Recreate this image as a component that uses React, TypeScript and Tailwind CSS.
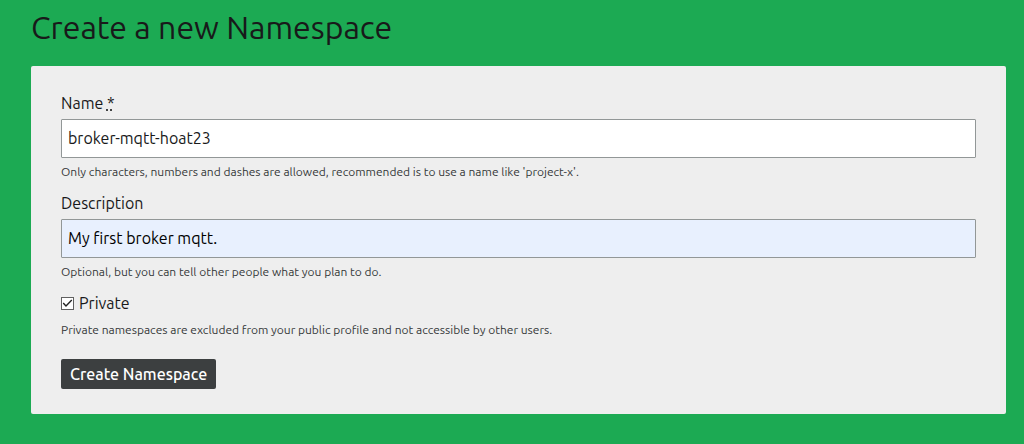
import { useState } from "react";
import type { InputHTMLAttributes, ReactNode } from "react";

type TextFieldProps = InputHTMLAttributes<HTMLInputElement> & {
  id: string;
  label: ReactNode;
  hint: string;
};

function Hint({ id, children }: { id: string; children: ReactNode }) {
  return (
    <p id={id} className="text-[12px] leading-5 text-[#36393a]">
      {children}
    </p>
  );
}

function TextField({ id, label, hint, className = "", ...rest }: TextFieldProps) {
  return (
    <div className="mb-[9px] flex flex-col gap-1">
      <label htmlFor={id} className="leading-6">
        {label}
      </label>
      <input
        id={id}
        type="text"
        aria-describedby={`${id}-hint`}
        className={`block h-[39px] w-full rounded-[1px] border border-[#929797] px-[6px] pb-[2px] ${className}`}
        {...rest}
      />
      <Hint id={`${id}-hint`}>{hint}</Hint>
    </div>
  );
}

export default function App() {
  const [isPrivate, setIsPrivate] = useState(true);

  return (
    <main className="min-h-screen bg-[#1caa53] pr-[18px] pb-[30px] pl-[31px] font-['Ubuntu','Noto_Sans',sans-serif] text-base text-[#18191a]">
      <h1 className="pt-[7px] pb-[19px] text-[32px] leading-10">Create a new Namespace</h1>
      <form
        className="rounded-[2px] bg-[#eeeeee] px-[30px] py-[25px]"
        onSubmit={(event) => event.preventDefault()}
      >
        <TextField
          id="name"
          label={
            <>
              Name{" "}
              <abbr title="required" className="underline decoration-dotted">
                *
              </abbr>
            </>
          }
          hint="Only characters, numbers and dashes are allowed, recommended is to use a name like 'project-x'."
          defaultValue="broker-mqtt-hoat23"
          className="bg-white"
        />
        <TextField
          id="description"
          label="Description"
          hint="Optional, but you can tell other people what you plan to do."
          defaultValue="My first broker mqtt."
          className="bg-[#e8f0fe] text-black"
        />
        <div className="mb-[19px] flex flex-col gap-[5px]">
          <label htmlFor="private" className="flex items-center gap-[5px] leading-6">
            <span className="grid size-[13px] shrink-0">
              <input
                id="private"
                type="checkbox"
                checked={isPrivate}
                onChange={(event) => setIsPrivate(event.target.checked)}
                aria-describedby="private-hint"
                className="col-start-1 row-start-1 size-[13px] appearance-none border border-[#606060] bg-white"
              />
              {isPrivate && (
                <svg
                  viewBox="0 0 13 13"
                  aria-hidden="true"
                  className="pointer-events-none col-start-1 row-start-1 size-[13px]"
                >
                  <path d="M2.2 6 5 8.9 10.8 3.1" fill="none" stroke="#222222" strokeWidth="1.4" />
                </svg>
              )}
            </span>
            Private
          </label>
          <Hint id="private-hint">
            Private namespaces are excluded from your public profile and not accessible by other users.
          </Hint>
        </div>
        <button
          type="submit"
          className="block h-[30px] rounded-[2px] bg-[#3c3f40] px-[9px] font-medium text-white"
        >
          Create Namespace
        </button>
      </form>
    </main>
  );
}
